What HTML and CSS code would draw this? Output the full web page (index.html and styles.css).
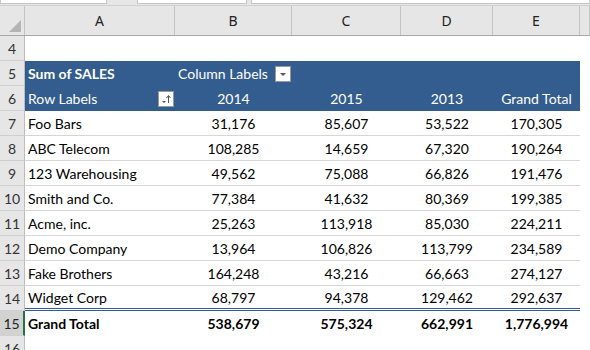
FILE: index.html
```html
<!DOCTYPE html>
<html lang="en">

<head>
    <meta charset="UTF-8">
    <meta name="viewport" content="width=device-width, initial-scale=1.0">
    <title>Pivot Table</title>

    <link rel="stylesheet" href="styles.css">
</head>

<body>
    <!-- formula bar remnants -->
    <div class="top-strip">
        <div class="box box-name"></div>
        <div class="box box-mid"></div>
        <div class="box box-formula"></div>
    </div>

    <!-- column letters -->
    <div class="row col-head">
        <div class="corner"><span class="corner-tri"></span></div>
        <div class="letter">A</div>
        <div class="letter">B</div>
        <div class="letter">C</div>
        <div class="letter">D</div>
        <div class="letter">E</div>
        <div class="letter"></div>
    </div>

    <div class="row empty">
        <div class="num">4</div>
        <div class="cell"></div><div class="cell"></div><div class="cell"></div><div class="cell"></div><div class="cell"></div><div class="cell"></div>
    </div>

    <div class="row pivot-head">
        <div class="num">5</div>
        <div class="cell left bold">Sum of SALES</div>
        <div class="cell left split">
            <span>Column Labels</span>
            <span class="filter-btn">
                <svg width="10" height="10" viewBox="0 0 10 10"><path d="M2 4 L8 4 L5 7 Z" fill="#555"/></svg>
            </span>
        </div>
        <div class="cell"></div>
        <div class="cell"></div>
        <div class="cell"></div>
        <div class="cell blank"></div>
    </div>

    <div class="row pivot-head">
        <div class="num">6</div>
        <div class="cell left split">
            <span>Row Labels</span>
            <span class="filter-btn sort-btn">
                <svg width="14" height="14" viewBox="0 0 14 14">
                    <path d="M3 9 L7 9 L5 11 Z" fill="#555"/>
                    <path d="M9.5 4 L9.5 11" stroke="#555" stroke-width="1"/>
                    <path d="M7.5 6 L9.5 3.5 L11.5 6" stroke="#555" stroke-width="1" fill="none"/>
                </svg>
            </span>
        </div>
        <div class="cell">2014</div>
        <div class="cell">2015</div>
        <div class="cell">2013</div>
        <div class="cell">Grand Total</div>
        <div class="cell blank"></div>
    </div>

    <div class="row data">
        <div class="num">7</div>
        <div class="cell left">Foo Bars</div>
        <div class="cell">31,176</div><div class="cell">85,607</div><div class="cell">53,522</div><div class="cell">170,305</div>
        <div class="cell blank"></div>
    </div>
    <div class="row data">
        <div class="num">8</div>
        <div class="cell left">ABC Telecom</div>
        <div class="cell">108,285</div><div class="cell">14,659</div><div class="cell">67,320</div><div class="cell">190,264</div>
        <div class="cell blank"></div>
    </div>
    <div class="row data">
        <div class="num">9</div>
        <div class="cell left">123 Warehousing</div>
        <div class="cell">49,562</div><div class="cell">75,088</div><div class="cell">66,826</div><div class="cell">191,476</div>
        <div class="cell blank"></div>
    </div>
    <div class="row data">
        <div class="num">10</div>
        <div class="cell left">Smith and Co.</div>
        <div class="cell">77,384</div><div class="cell">41,632</div><div class="cell">80,369</div><div class="cell">199,385</div>
        <div class="cell blank"></div>
    </div>
    <div class="row data">
        <div class="num">11</div>
        <div class="cell left">Acme, inc.</div>
        <div class="cell">25,263</div><div class="cell">113,918</div><div class="cell">85,030</div><div class="cell">224,211</div>
        <div class="cell blank"></div>
    </div>
    <div class="row data">
        <div class="num">12</div>
        <div class="cell left">Demo Company</div>
        <div class="cell">13,964</div><div class="cell">106,826</div><div class="cell">113,799</div><div class="cell">234,589</div>
        <div class="cell blank"></div>
    </div>
    <div class="row data">
        <div class="num">13</div>
        <div class="cell left">Fake Brothers</div>
        <div class="cell">164,248</div><div class="cell">43,216</div><div class="cell">66,663</div><div class="cell">274,127</div>
        <div class="cell blank"></div>
    </div>
    <div class="row data last">
        <div class="num">14</div>
        <div class="cell left">Widget Corp</div>
        <div class="cell">68,797</div><div class="cell">94,378</div><div class="cell">129,462</div><div class="cell">292,637</div>
        <div class="cell blank"></div>
    </div>

    <div class="row total">
        <div class="num active">15</div>
        <div class="cell left">Grand Total</div>
        <div class="cell">538,679</div><div class="cell">575,324</div><div class="cell">662,991</div><div class="cell">1,776,994</div>
        <div class="cell blank"></div>
    </div>

    <div class="row empty">
        <div class="num">16</div>
        <div class="cell"></div><div class="cell"></div><div class="cell"></div><div class="cell"></div><div class="cell"></div><div class="cell"></div>
    </div>
</body>

</html>
```

FILE: styles.css
```css
/* Reset */
* {
    margin: 0;
    padding: 0;
    box-sizing: border-box;
}

body {
    width: 590px;
    height: 350px;
    overflow: hidden;
    background: #ffffff;
    font-family: 'Lato', 'Open Sans', sans-serif;
    font-size: 14px;
    color: #000;
}

/* Top strip (formula bar bits) */
.top-strip {
    display: flex;
    height: 5px;
    background: #e6e6e6;
}

.top-strip .box {
    background: #ffffff;
    border: 1px solid #c6c6c6;
    border-top: none;
    height: 4px;
}

.box-name {
    width: 107px;
}

.box-mid {
    width: 110px;
    margin-left: 30px;
}

.box-formula {
    flex: 1;
    margin-left: 4px;
}

/* Grid rows */
.row {
    display: grid;
    grid-template-columns: 25px 150px 117px 109px 92px 87px 1fr;
    height: 25px;
}

.col-head {
    height: 31px;
    background: #e6e6e6;
    border-top: 1px solid #d0d0d0;
    border-bottom: 1px solid #a8a8a8;
}

.col-head .letter {
    display: flex;
    align-items: center;
    justify-content: center;
    font-family: 'Noto Sans', sans-serif;
    font-size: 14px;
    color: #222;
    border-right: 1px solid #c4c4c4;
}

.corner {
    position: relative;
    border-right: 1px solid #c4c4c4;
}

.corner-tri {
    position: absolute;
    right: 3px;
    bottom: 3px;
    width: 0;
    height: 0;
    border-left: 12px solid transparent;
    border-bottom: 12px solid #b4b4b4;
}

.num {
    display: flex;
    align-items: center;
    justify-content: center;
    background: #e6e6e6;
    color: #333;
    font-size: 14px;
    border-right: 1px solid #bdbdbd;
    border-bottom: 1px solid #d0d0d0;
}

.num.active {
    background: #d2d2d2;
    color: #222;
    border-right: 2px solid #217346;
}

.cell {
    display: flex;
    align-items: center;
    justify-content: center;
    white-space: nowrap;
}

.cell.left {
    justify-content: flex-start;
    padding-left: 3px;
}

.bold {
    font-weight: 700;
}

/* Pivot header rows */
.pivot-head .cell {
    background: #345d8f;
    color: #ffffff;
}

.pivot-head .cell.blank {
    background: #ffffff;
}

.cell.split {
    justify-content: space-between;
    padding-right: 1px;
}

.filter-btn {
    display: inline-flex;
    align-items: center;
    justify-content: center;
    width: 16px;
    height: 16px;
    background: #ffffff;
    border: 1px solid #9a9a9a;
}

/* Data rows */
.data .cell {
    border-bottom: 1px solid #d6d6d6;
}

.data .cell.blank {
    border-bottom: none;
}

.data.last .cell {
    border-bottom: 3px double #345d8f;
}

.data.last .cell.blank {
    border-bottom: none;
}

/* Grand total */
.total .cell {
    font-weight: 700;
}
```
